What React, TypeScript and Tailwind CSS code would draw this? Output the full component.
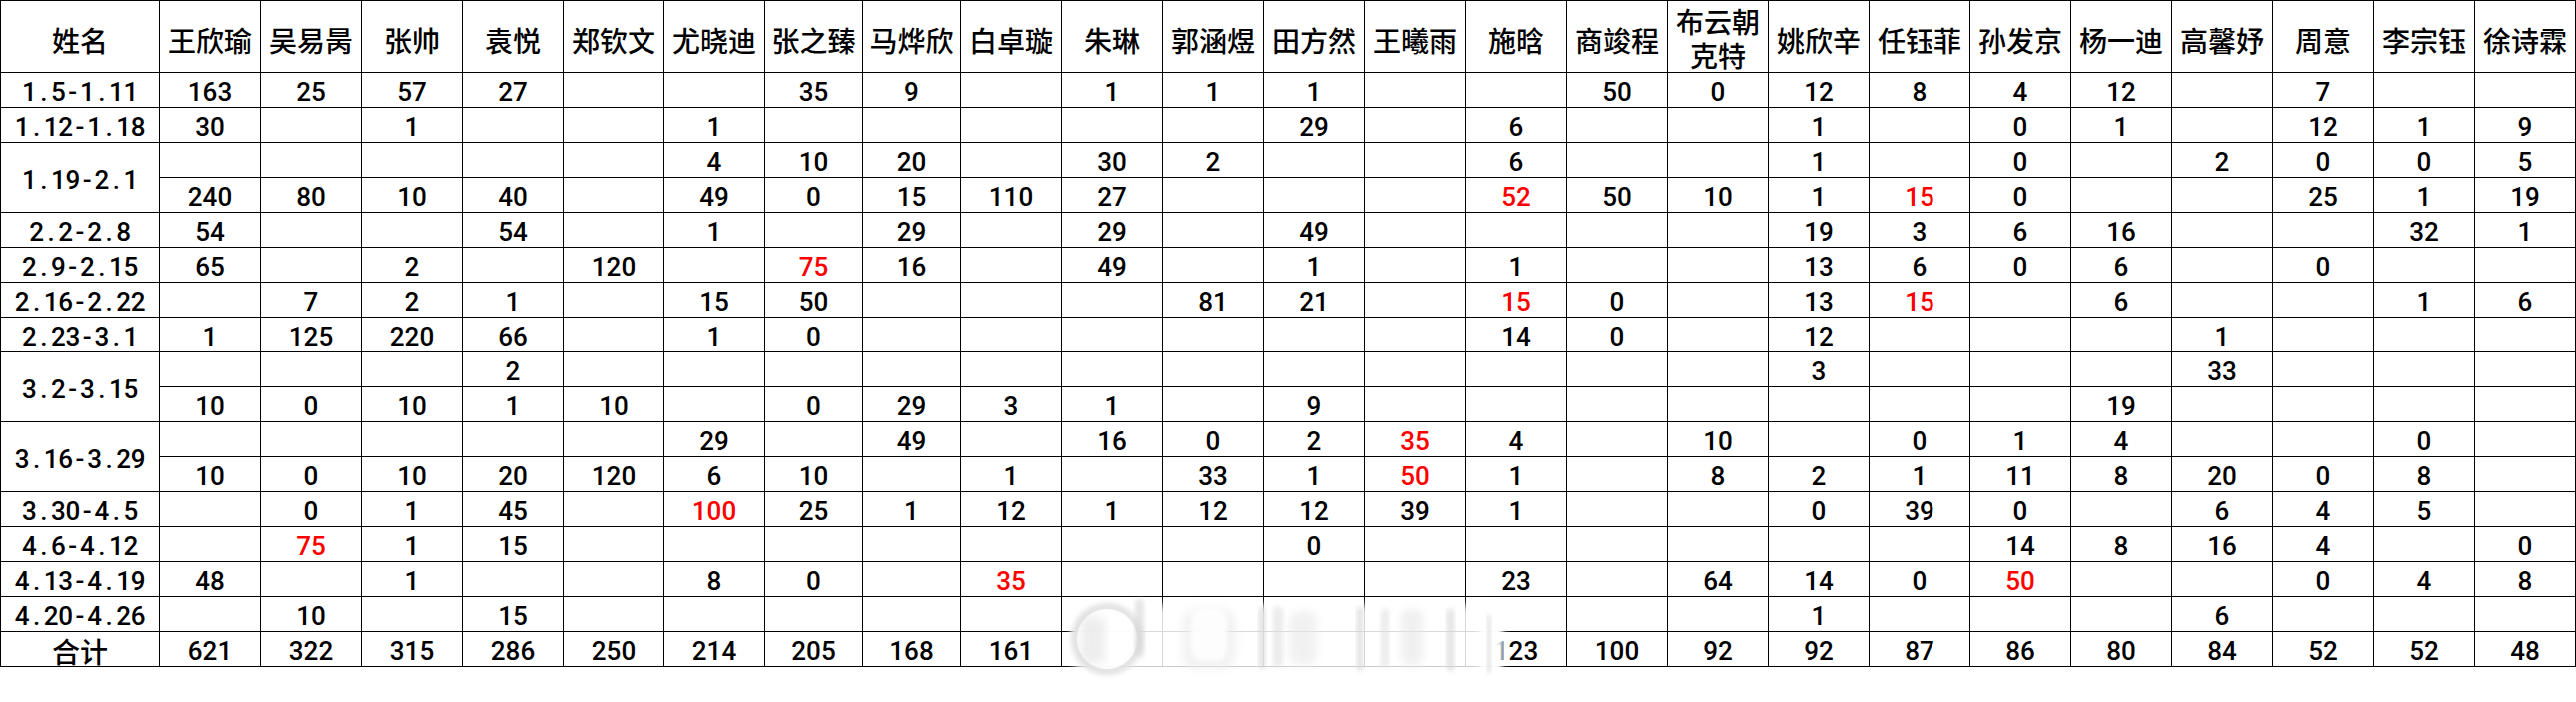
import React from "react";

// 24 players, left to right
const names = [
  "王欣瑜", "吴易昺", "张帅", "袁悦", "郑钦文", "尤晓迪", "张之臻", "马烨欣",
  "白卓璇", "朱琳", "郭涵煜", "田方然", "王曦雨", "施晗", "商竣程", "布云朝克特",
  "姚欣辛", "任钰菲", "孙发京", "杨一迪", "高馨妤", "周意", "李宗钰", "徐诗霖",
];

// "-" = empty cell, trailing "r" = red number
type Row = { label?: string; span?: boolean; cells: string };

const rows: Row[] = [
  { label: "1.5-1.11", cells: "163 25 57 27 - - 35 9 - 1 1 1 - - 50 0 12 8 4 12 - 7 - -" },
  { label: "1.12-1.18", cells: "30 - 1 - - 1 - - - - - 29 - 6 - - 1 - 0 1 - 12 1 9" },
  { label: "1.19-2.1", span: true, cells: "- - - - - 4 10 20 - 30 2 - - 6 - - 1 - 0 - 2 0 0 5" },
  { cells: "240 80 10 40 - 49 0 15 110 27 - - - 52r 50 10 1 15r 0 - - 25 1 19" },
  { label: "2.2-2.8", cells: "54 - - 54 - 1 - 29 - 29 - 49 - - - - 19 3 6 16 - - 32 1" },
  { label: "2.9-2.15", cells: "65 - 2 - 120 - 75r 16 - 49 - 1 - 1 - - 13 6 0 6 - 0 - -" },
  { label: "2.16-2.22", cells: "- 7 2 1 - 15 50 - - - 81 21 - 15r 0 - 13 15r - 6 - - 1 6" },
  { label: "2.23-3.1", cells: "1 125 220 66 - 1 0 - - -  - - - 14 0 - 12 - - - 1 - - -" },
  { label: "3.2-3.15", span: true, cells: "- - - 2  - - - -  - - - -  - - - -  3 - - - 33 - - -" },
  { cells: "10 0 10 1 10 - 0 29 3 1 - 9  - - - - - - -  19 - - - -" },
  { label: "3.16-3.29", span: true, cells: "- - - - - 29 - 49 - 16 0 2 35r 4 - 10 - 0 1 4 - - 0 -" },
  { cells: "10 0 10 20 120 6 10 - 1 - 33 1 50r 1 - 8 2 1 11 8 20 0 8 -" },
  { label: "3.30-4.5", cells: "- 0 1 45 - 100r 25 1 12 1 12 12 39 1 - - 0 39 0 - 6 4 5 -" },
  { label: "4.6-4.12", cells: "- 75r 1 15  - - - - - - -  0  - - - - - -  14 8 16 4 - 0" },
  { label: "4.13-4.19", cells: "48 - 1 - - 8 0 - 35r - - - - 23 - 64 14 0 50r - - 0 4 8" },
  { label: "4.20-4.26", cells: "- 10 - 15  - - - -  - - - -  - - - -  1 - - - 6 - - -" },
  { label: "合计", cells: "621 322 315 286 250 214 205 168 161 - - - - 123 100 92 92 87 86 80 84 52 52 48" },
];

const cjk = "font-[family-name:'Noto_Sans_CJK_SC',sans-serif]";
const num = "font-[family-name:Roboto,'Liberation_Sans',sans-serif]";

// dates are set half-width monospaced like the spreadsheet's 黑体
function DateLabel({ text }: { text: string }) {
  return (
    <span className={`flex ${num} text-[26px] font-medium`}>
      {text.split("").map((ch, i) => (
        <span key={i} className="inline-block w-[14.5px] text-center">
          {ch}
        </span>
      ))}
    </span>
  );
}

function Watermark() {
  // blurred weibo-style watermark over the totals row
  return (
    <svg
      className="absolute left-[1066px] top-[596px] pointer-events-none"
      width="446"
      height="86"
      viewBox="0 0 446 86"
    >
      <defs>
        <filter id="soft" x="-20%" y="-20%" width="140%" height="140%">
          <feGaussianBlur stdDeviation="2.5" />
        </filter>
        <filter id="softer" x="-20%" y="-20%" width="140%" height="140%">
          <feGaussianBlur stdDeviation="4" />
        </filter>
      </defs>
      <rect x="8" y="10" width="430" height="68" rx="12" fill="#fff" opacity="0.85" filter="url(#softer)" />
      <circle cx="42" cy="44" r="32" fill="none" stroke="#e2e2e2" strokeWidth="8" filter="url(#soft)" />
      <circle cx="42" cy="44" r="30" fill="#fff" opacity="0.9" />
      <rect x="16" y="22" width="24" height="46" rx="6" fill="#dcdcdc" opacity="0.5" filter="url(#softer)" />
      <rect x="70" y="4" width="9" height="58" rx="4" fill="#d4d4d4" opacity="0.6" filter="url(#soft)" />
      <rect x="118" y="14" width="52" height="60" rx="14" fill="#e8e8e8" opacity="0.6" filter="url(#softer)" />
      <rect x="126" y="14" width="36" height="52" rx="10" fill="#fff" opacity="0.9" filter="url(#soft)" />
      <rect x="194" y="12" width="6" height="62" rx="3" fill="#d4d4d4" opacity="0.7" filter="url(#soft)" />
      <rect x="208" y="12" width="10" height="60" rx="4" fill="#dedede" opacity="0.6" filter="url(#soft)" />
      <rect x="224" y="16" width="28" height="54" rx="10" fill="#e8e8e8" opacity="0.6" filter="url(#softer)" />
      <rect x="292" y="12" width="6" height="64" rx="3" fill="#d4d4d4" opacity="0.7" filter="url(#soft)" />
      <rect x="316" y="14" width="8" height="58" rx="3" fill="#dedede" opacity="0.6" filter="url(#soft)" />
      <rect x="336" y="14" width="22" height="56" rx="8" fill="#e6e6e6" opacity="0.6" filter="url(#softer)" />
      <rect x="382" y="14" width="7" height="62" rx="3" fill="#d6d6d6" opacity="0.7" filter="url(#soft)" />
      <rect x="414" y="22" width="22" height="54" rx="4" fill="#fff" opacity="0.9" filter="url(#soft)" />
      <rect x="422" y="20" width="4" height="58" fill="#c4c4c4" opacity="0.5" filter="url(#soft)" />
    </svg>
  );
}

export default function App() {
  return (
    <div className={`relative w-[2578px] h-[703px] overflow-hidden bg-white text-black ${cjk}`}>
      <div className="grid w-max grid-cols-[158px_repeat(6,100px)_repeat(2,97px)_repeat(16,100px)] grid-rows-[71px_repeat(17,34px)] gap-px bg-black p-px">
        <div className="flex items-center justify-center bg-white pt-[6px] text-[28px] font-medium leading-none">
          姓名
        </div>
        {names.map((n) => (
          <div
            key={n}
            className={`flex items-center justify-center bg-white text-center text-[28px] font-medium ${
              n.length > 3 ? "leading-[34px] pt-[3px]" : "leading-none pt-[6px] whitespace-nowrap"
            }`}
          >
            <span className={n.length > 3 ? "w-[86px]" : ""}>{n}</span>
          </div>
        ))}
        {rows.map((row, i) => {
          const cells = row.cells.trim().split(/\s+/);
          return (
            <React.Fragment key={i}>
              {row.label && (
                <div
                  className={`flex items-center justify-center bg-white pt-[4px] leading-none ${
                    row.span ? "row-span-2" : ""
                  }`}
                >
                  {row.label === "合计" ? (
                    <span className="text-[28px] font-medium">{row.label}</span>
                  ) : (
                    <DateLabel text={row.label} />
                  )}
                </div>
              )}
              {cells.map((c, j) => {
                const red = c.endsWith("r");
                const v = c === "-" ? "" : red ? c.slice(0, -1) : c;
                return (
                  <div
                    key={j}
                    className={`flex items-center justify-center bg-white pt-[4px] text-[26px] font-medium leading-none ${num} ${
                      red ? "text-[#ff0000]" : ""
                    }`}
                  >
                    {v}
                  </div>
                );
              })}
            </React.Fragment>
          );
        })}
      </div>
      <Watermark />
    </div>
  );
}
